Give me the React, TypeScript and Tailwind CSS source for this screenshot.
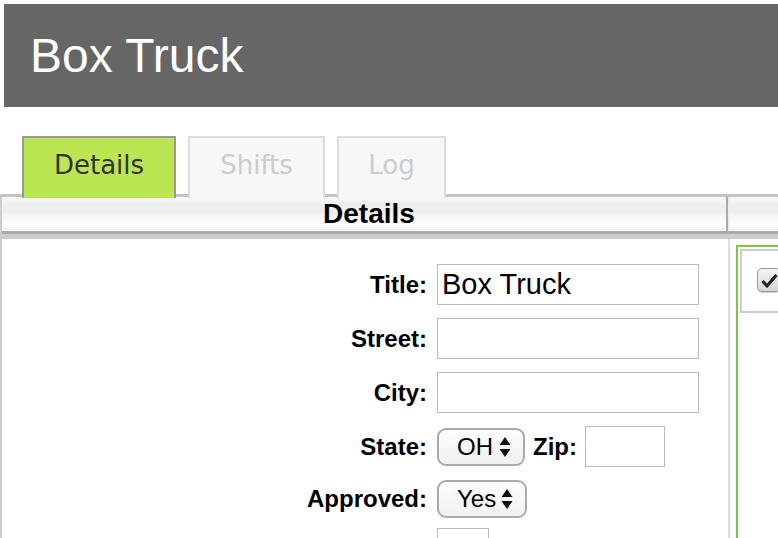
const tabs = [
  { label: "Details", active: true, w: "w-[154px]" },
  { label: "Shifts", active: false, w: "w-[137px]" },
  { label: "Log", active: false, w: "w-[109px]" },
];

const Arrows = () => (
  <svg width="12" height="22" viewBox="0 0 12 22" className="shrink-0">
    <path d="M6 1 L11.5 9 H0.5 Z" fill="#111" />
    <path d="M6 21 L11.5 13 H0.5 Z" fill="#111" />
  </svg>
);

const FakeSelect = ({ value, w }: { value: string; w: string }) => (
  <div
    className={`${w} h-[38px] flex items-center justify-between pl-[18px] pr-[12px] rounded-[9px] border-2 border-[#aaa] bg-[linear-gradient(to_bottom,#fdfdfd,#f1f1f1)] text-[24px] text-black`}
  >
    <span>{value}</span>
    <Arrows />
  </div>
);

const Label = ({ text }: { text: string }) => (
  <div className="w-[425px] shrink-0 mr-[10px] text-right font-bold text-[24px] text-black">
    {text}
  </div>
);

const TextBox = ({ w, value }: { w: string; value?: string }) => (
  <div
    className={`${w} h-[41px] border border-[#bbb] bg-white flex items-center px-[4px] text-[29px] text-black`}
  >
    {value}
  </div>
);

const headGradient =
  "bg-[linear-gradient(to_bottom,#f9f9f9_0%,#ededed_25%,#eeeeee_45%,#f7f7f7_60%,#fdfdfd_80%,#f2f2f2_100%)]";

export default function App() {
  return (
    <div className="w-[778px] h-[538px] overflow-hidden bg-white font-['Liberation_Sans',Arial,sans-serif]">
      {/* header */}
      <div className="ml-[4px] mt-[4px] h-[103px] bg-[#666] flex items-center pl-[26px]">
        <h1 className="text-[48px] text-white leading-none">Box Truck</h1>
      </div>

      {/* tabs */}
      <div className="flex items-start gap-[12px] pl-[22px] mt-[29px] h-[58px] relative z-10">
        {tabs.map(({ label, active, w }) => (
          <div
            key={label}
            className={`${w} h-[62px] flex items-center justify-center pb-[6px] border-2 border-b-0 font-['DejaVu_Sans',Verdana,sans-serif] text-[26px] ${
              active
                ? "bg-[#bbe651] border-[#999] text-[#333]"
                : "bg-[#f7f7f7] border-[#ddd] text-[#ccc]"
            }`}
          >
            {label}
          </div>
        ))}
      </div>

      {/* table */}
      <div className="border-t-[3px] border-[#c4c4c4] flex">
        {/* left column */}
        <div className="w-[730px] shrink-0 border-l-2 border-[#ccc]">
          <div className="flex">
            <div className={`flex-1 h-[34px] flex items-center justify-center pl-[10px] ${headGradient} font-bold text-[28px] text-black`}>
              Details
            </div>
            <div className="w-[2px] bg-[#aaa]" />
            <div className="w-[2px] bg-[#eee]" />
          </div>
          <div className="h-[3px] bg-[#aaa]" />
          <div className="h-[5px] bg-[#ccc]" />
          <div className="border-r-2 border-[#ddd] pt-[25px] h-[400px]">
            {["Title:", "Street:", "City:"].map((label, i) => (
              <div key={label} className="flex items-center h-[41px] mb-[13px]">
                <Label text={label} />
                <TextBox w="w-[262px]" value={i === 0 ? "Box Truck" : undefined} />
              </div>
            ))}
            <div className="flex items-center h-[41px] mb-[13px]">
              <Label text="State:" />
              <FakeSelect value="OH" w="w-[88px]" />
              <span className="ml-[8px] mr-[8px] font-bold text-[24px] text-black">Zip:</span>
              <TextBox w="w-[80px]" />
            </div>
            <div className="flex items-center h-[38px] mb-[10px]">
              <Label text="Approved:" />
              <FakeSelect value="Yes" w="w-[90px]" />
            </div>
            <div className="flex items-center h-[41px]">
              <div className="w-[435px] shrink-0" />
              <TextBox w="w-[52px]" />
            </div>
          </div>
        </div>

        {/* right column */}
        <div className="flex-1">
          <div className={`h-[34px] ${headGradient}`} />
          <div className="h-[3px] bg-[#aaa]" />
          <div className="h-[5px] bg-[#ccc]" />
          <div className="pl-[6px] pt-[6px]">
            <div className="border-2 border-r-0 border-[#7dc63f] pl-[2px] pt-[2px] h-[300px]">
              <div className="border-2 border-r-0 border-[#ccc] h-[64px] flex items-center pl-[15px] pb-[2px]">
                <div className="w-[24px] h-[24px] rounded-[5px] border border-[#999] bg-[linear-gradient(to_bottom,#f4f4f4,#d6d6d6)] flex items-center justify-center shadow-[0_1px_1px_rgba(0,0,0,0.2)]">
                  <svg width="17" height="15" viewBox="0 0 17 15">
                    <path d="M1.5 8 L6 13 L15.5 2" fill="none" stroke="#222" strokeWidth="3.2" strokeLinejoin="round" />
                  </svg>
                </div>
              </div>
            </div>
          </div>
        </div>
      </div>
    </div>
  );
}
